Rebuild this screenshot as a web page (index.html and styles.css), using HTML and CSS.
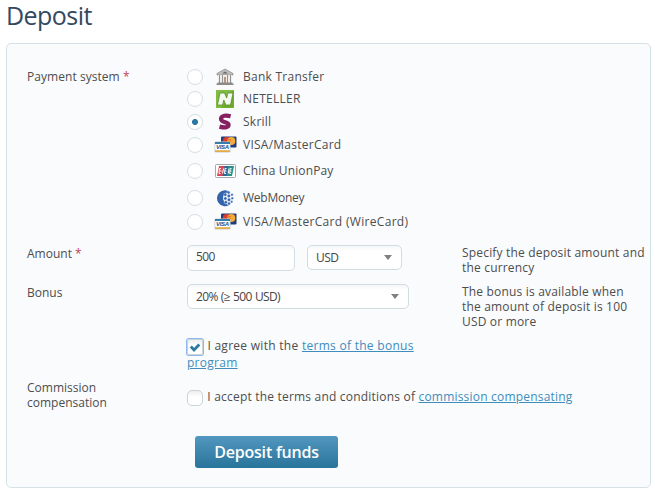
FILE: index.html
```html
<!DOCTYPE html>
<html lang="en">
<head>
    <meta charset="UTF-8">
    <meta name="viewport" content="width=device-width, initial-scale=1.0">
    <title>Deposit</title>
    <link rel="stylesheet" href="styles.css">
</head>
<body>
    <h1>Deposit</h1>
    <form class="panel">
        <div class="row systems">
            <div class="label">Payment system <span class="required">*</span></div>
            <div class="options">
                <label class="option">
                    <input type="radio" name="system">
                    <svg class="icon" width="24" height="20" viewBox="0 0 24 20">
                        <path d="M12 2L20 6.500V8H4V6.500Z" fill="#c0bebc" stroke="#8f8c89" stroke-width=".8"/>
                        <path d="M9 6.400L12 4.500l3 1.900z" fill="#6b6865"/>
                        <path d="M5 8h14v8H5z" fill="#efedeb"/>
                        <path d="M6.500 8v8M9.500 8v8M14.500 8v8M17.500 8v8" stroke="#96928e"/>
                        <path d="M11 10h2v6h-2z" fill="#b9967f"/>
                        <path d="M4.500 15.500h15v1h1V18h-17v-1.500h1z" fill="#8d8b89"/>
                    </svg>
                    <span class="name">Bank Transfer</span>
                </label>
                <label class="option">
                    <input type="radio" name="system">
                    <svg class="icon" width="24" height="20" viewBox="0 0 24 20">
                        <rect x="3" y="1" width="18" height="18" rx="1" fill="#6fac2c"/>
                        <path d="M3 2a1 1 0 0 1 1-1h16L8 19H3z" fill="#80bb42"/>
                        <path d="M4.500 16L7 4h4.500l2.200 5 1-5H20l-2.500 12h-4.700l-2-5-1.200 5z" fill="#f4f8ee" stroke="#4d8420" stroke-width=".7"/>
                    </svg>
                    <span class="name">NETELLER</span>
                </label>
                <label class="option tall">
                    <input type="radio" name="system" checked>
                    <svg class="icon" width="24" height="20" viewBox="0 0 24 20">
                        <path d="M17.600 4.300C13.500 3.200 8.300 3.200 8 6.900c-.2 4.200 7.900 2.500 7.600 6-.2 3-4.500 2.900-9.100 1.700" fill="none" stroke="#86205f" stroke-width="4.200"/>
                    </svg>
                    <span class="name">Skrill</span>
                </label>
                <label class="option">
                    <input type="radio" name="system">
                    <svg class="icon" width="24" height="20" viewBox="0 0 24 20">
                        <g id="cards">
                            <rect x="8" y="1.500" width="15.500" height="11" rx="1" fill="#253c7b"/>
                            <circle cx="13.800" cy="6" r="4" fill="#dc3c2c"/>
                            <circle cx="18.300" cy="6" r="4" fill="#f2ac38"/>
                            <path d="M14 4.500h4M14 6.200h4" stroke="#e77c30"/>
                            <rect x="1.900" y="6.900" width="15.200" height="10.200" rx=".6" fill="#fff" stroke="#c5cbd0" stroke-width=".8"/>
                            <path d="M2 7h15v2H2z" fill="#347dad"/>
                            <path d="M2 15.200h15V17H2z" fill="#e3ac48"/>
                            <text class="visa" x="3" y="14.400" textLength="13">VISA</text>
                        </g>
                    </svg>
                    <span class="name">VISA/MasterCard</span>
                </label>
                <label class="option union">
                    <input type="radio" name="system">
                    <svg class="icon" width="24" height="20" viewBox="0 0 24 20">
                        <rect x="2.500" y="3.500" width="20" height="13" rx="1" fill="#fff" stroke="#9fa9af"/>
                        <path d="M6 5h6l-2 10H4z" fill="#d94653"/>
                        <path d="M11.500 5H16l-2 10H9.500z" fill="#2e669b"/>
                        <path d="M15.500 5H21l-2 10h-5.500z" fill="#259085"/>
                        <path d="M8 7.500H6.500L6 12.500h1.500M7 10h1.500M10.500 7.500l-1 5M13.500 7.500H12l-.5 5H13M12 10h1.500M16 7.500l-.7 5M18.500 7.500h-1.300l-.5 5H18M17 10h1.500" fill="none" stroke="#fff"/>
                    </svg>
                    <span class="name tight">China UnionPay</span>
                </label>
                <label class="option tall">
                    <input type="radio" name="system">
                    <svg class="icon" width="24" height="20" viewBox="0 0 24 20">
                        <path d="M17 4A8 8 0 1 0 16 17.200C12 16 10.500 13.500 10.500 10.200S13 4.500 17 4z" fill="#3465ac"/>
                        <circle cx="15.700" cy="10" r="5.600" fill="#fff"/>
                        <circle class="globe" cx="15.600" cy="4.500" r="1.500"/>
                        <circle class="globe" cx="12.300" cy="6.700" r="1.600"/>
                        <circle class="globe" cx="15.800" cy="8" r="1.700"/>
                        <circle class="globe" cx="19" cy="6.800" r="1.300"/>
                        <circle class="globe" cx="12.300" cy="10.400" r="1.600"/>
                        <circle class="globe" cx="16" cy="11.800" r="1.700"/>
                        <circle class="globe" cx="19.300" cy="10.300" r="1.300"/>
                        <circle class="globe" cx="12.800" cy="14.200" r="1.600"/>
                        <circle class="globe" cx="16" cy="15.500" r="1.500"/>
                        <circle class="globe" cx="18.700" cy="13.800" r="1.200"/>
                    </svg>
                    <span class="name web">WebMoney</span>
                </label>
                <label class="option tall">
                    <input type="radio" name="system">
                    <svg class="icon" width="24" height="20" viewBox="0 0 24 20"><use href="#cards"/></svg>
                    <span class="name wire">VISA/MasterCard (WireCard)</span>
                </label>
            </div>
        </div>

        <div class="row amount">
            <div class="label">Amount <span class="required">*</span></div>
            <div class="fields">
                <input class="field" type="text" value="500">
                <div class="select currency"><span>USD</span><i class="arrow"></i></div>
            </div>
            <div class="hint">Specify the deposit amount and the currency</div>
        </div>

        <div class="row bonus">
            <div class="label">Bonus</div>
            <div class="fields">
                <div class="select"><span>20% (≥ 500 USD)</span><i class="arrow"></i></div>
            </div>
            <div class="hint">The bonus is available when the amount of deposit is 100 USD or more</div>
        </div>

        <div class="row agree">
            <div class="label"></div>
            <div class="terms">
                <span class="checkbox checked"><svg width="12" height="11" viewBox="0 0 12 11"><path d="M1.800 4.500L5 8l5.300-5.500" fill="none" stroke="#2b78a3" stroke-width="2.800"/></svg></span>
                I agree with the <a href="#">terms of the bonus program</a>
            </div>
        </div>

        <div class="row commission">
            <div class="label">Commission compensation</div>
            <div class="terms wide">
                <span class="checkbox"></span>
                I accept the terms and conditions of <a href="#">commission compensating</a>
            </div>
        </div>

        <button class="submit" type="button">Deposit funds</button>
    </form>
</body>
</html>
```
FILE: styles.css
```css
* {
    margin: 0;
    padding: 0;
    box-sizing: border-box;
}

body {
    background: #fff;
    color: #4d4d4d;
    font-family: "Trebuchet MS", "Open Sans", "Noto Sans", sans-serif;
    font-size: 12px;
    line-height: 15px;
    padding: 0 4px 0 6px;
}

h1 {
    height: 43px;
    color: #34495e;
    font-size: 25px;
    font-weight: 400;
    letter-spacing: -.55px;
    line-height: 31px;
}

.panel {
    height: 445px;
    padding: 22px 0 0 20px;
    border: 1px solid #d5e2e6;
    border-radius: 5px;
    background: #f9fbfd;
}

.row {
    display: grid;
    grid-template-columns: 160px 275px 1fr;
}

.required {
    color: #c8405a;
}

.label {
    width: 110px;
}

/* payment systems */
.systems {
    height: 179px;
}

.systems .label {
    width: auto;
    padding-top: 3px;
    letter-spacing: .05px;
}

.option {
    display: flex;
    align-items: center;
    height: 22px;
}

.option.tall {
    height: 24px;
}

.option.union {
    height: 30px;
}

input[type="radio"] {
    appearance: none;
    width: 16px;
    height: 16px;
    border: 1px solid #d3e0e3;
    border-radius: 50%;
    background: #fff;
}

input[type="radio"]:checked {
    background: radial-gradient(circle, #2b78a3 2.6px, #fff 3.4px);
}

.icon {
    margin: 0 4px 0 10px;
}

.name {
    margin-left: 2px;
    padding-bottom: 2px;
    letter-spacing: .25px;
    white-space: nowrap;
}

.name.tight {
    letter-spacing: .12px;
}

.name.web {
    letter-spacing: -.25px;
}

.name.wire {
    letter-spacing: .32px;
}

.visa {
    fill: #294e8c;
    font: italic bold 6px "Liberation Sans", sans-serif;
}

.globe {
    fill: #3465ac;
    stroke: #fff;
    stroke-width: .4;
}

/* amount and bonus */
.amount {
    height: 39px;
}

.bonus {
    height: 54px;
}

.amount .label,
.bonus .label {
    padding-top: 1px;
}

.hint {
    letter-spacing: .18px;
}

.bonus .hint {
    padding-right: 18px;
}

.fields {
    display: flex;
    align-items: flex-start;
    gap: 12px;
}

.field,
.select {
    border: 1px solid #d0dde1;
    border-radius: 5px;
    background: linear-gradient(#f5f6f7, #fff 5px);
    color: #444;
    font: 12px/15px "Open Sans", sans-serif;
    letter-spacing: -.6px;
    word-spacing: .5px;
}

.field {
    width: 108px;
    height: 26px;
    padding: 0 8px 3px;
}

.select {
    display: flex;
    align-items: center;
    justify-content: space-between;
    width: 222px;
    height: 25px;
    padding: 0 9px 0 8px;
}

.currency {
    width: 95px;
}

.arrow {
    border: solid transparent;
    border-width: 5px 4px 0;
    border-top-color: #808080;
}

/* terms */
.agree {
    height: 42px;
}

.terms {
    width: 240px;
    margin-top: -1px;
    letter-spacing: .28px;
    line-height: 17px;
}

.terms.wide {
    width: 440px;
    padding-top: 9px;
    letter-spacing: .2px;
}

.terms a {
    color: #3e8dbc;
}

.checkbox {
    display: inline-flex;
    align-items: center;
    justify-content: center;
    width: 16px;
    height: 16px;
    margin: 2px 1px -3px 0;
    border: 1px solid #cbd5d8;
    border-radius: 5px;
    background: linear-gradient(#eee, #fff 6px);
    vertical-align: top;
}

.checked {
    border-radius: 2px;
    box-shadow: 0 0 0 1px #8db7ef;
}

.submit {
    display: block;
    width: 143px;
    height: 32px;
    margin: 26px 0 0 168px;
    padding-bottom: 1px;
    border: 0;
    border-radius: 3px;
    background: linear-gradient(#5297bf, #29749b);
    color: #fff;
    font: 600 16px "Trebuchet MS", "Open Sans", sans-serif;
    letter-spacing: -.2px;
}
```
